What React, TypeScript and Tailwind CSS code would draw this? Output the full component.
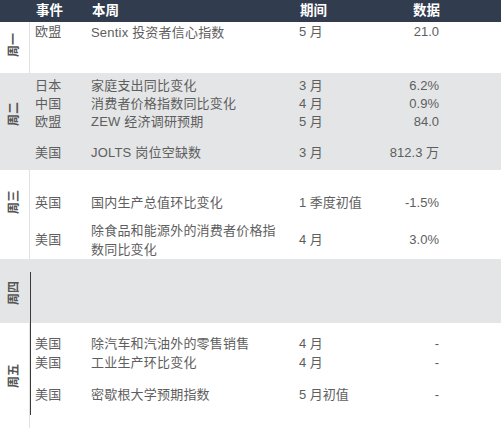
import React from "react";

type Row = { c: string; t: React.ReactNode; p: string; d: string; h: string };

const font = { fontFamily: '"Liberation Sans", "Noto Sans CJK SC", sans-serif' };

function DataRow({ r }: { r: Row }) {
  return (
    <div className={`grid grid-cols-[56px_208px_80px_60px] items-center pl-[5px] ${r.h}`}>
      <div className="tracking-[0.3px]">{r.c}</div>
      <div className="leading-[19px] tracking-[0.2px]">{r.t}</div>
      <div>{r.p}</div>
      <div className="text-right">{r.d}</div>
    </div>
  );
}

function Label({ text, cls }: { text: string; cls: string }) {
  return (
    <div className={`w-[30px] shrink-0 border-r border-[#e2e2e2] flex items-center justify-center ${cls}`}>
      <span className="-rotate-90 inline-block whitespace-nowrap text-[12px] font-bold text-[#555] leading-none">
        {text}
      </span>
    </div>
  );
}

export default function App() {
  return (
    <div className="relative w-[501px] h-[428px] bg-white text-[13px] text-[#5e5e5e] overflow-hidden" style={font}>
      {/* header */}
      <div className="flex h-[22px] bg-[#313c4f] text-white font-bold text-[13.5px]">
        <div className="w-[31px] shrink-0" />
        <div className="grid grid-cols-[56px_208px_80px_60px] items-center pl-[5px]">
          <div>事件</div>
          <div>本周</div>
          <div>期间</div>
          <div className="text-right">数据</div>
        </div>
      </div>

      {/* Monday */}
      <div className="flex h-[51px] bg-white">
        <Label text="周一" cls="pb-[5px]" />
        <div className="flex flex-col">
          <DataRow r={{ c: "欧盟", t: "Sentix 投资者信心指数", p: "5 月", d: "21.0", h: "h-[20px]" }} />
        </div>
      </div>

      {/* Tuesday */}
      <div className="flex h-[97px] bg-[#e4e5e6]">
        <Label text="周二" cls="pb-[15px] border-[#e4e5e6]" />
        <div className="flex flex-col pt-[3px]">
          <DataRow r={{ c: "日本", t: "家庭支出同比变化", p: "3 月", d: "6.2%", h: "h-[18px]" }} />
          <DataRow r={{ c: "中国", t: "消费者价格指数同比变化", p: "4 月", d: "0.9%", h: "h-[18px]" }} />
          <DataRow r={{ c: "欧盟", t: "ZEW 经济调研预期", p: "5 月", d: "84.0", h: "h-[18px]" }} />
          <div className="h-[13px]" />
          <DataRow r={{ c: "美国", t: "JOLTS 岗位空缺数", p: "3 月", d: "812.3 万", h: "h-[18px]" }} />
        </div>
      </div>

      {/* Wednesday */}
      <div className="flex h-[89px] bg-white">
        <Label text="周三" cls="pb-[25px]" />
        <div className="flex flex-col pt-[23px]">
          <DataRow r={{ c: "英国", t: "国内生产总值环比变化", p: "1 季度初值", d: "-1.5%", h: "h-[18px]" }} />
          <div className="h-[10px]" />
          <DataRow
            r={{
              c: "美国",
              t: (
                <>
                  除食品和能源外的消费者价格指
                  <br />
                  数同比变化
                </>
              ),
              p: "4 月",
              d: "3.0%",
              h: "h-[38px]",
            }}
          />
        </div>
      </div>

      {/* Thursday */}
      <div className="flex h-[64px] bg-[#e4e5e6]">
        <Label text="周四" cls="pt-[4px] border-[#e4e5e6]" />
        <div className="flex-1" />
      </div>

      {/* Friday */}
      <div className="flex h-[105px] bg-white">
        <Label text="周五" cls="" />
        <div className="flex flex-col pt-[11px]">
          <DataRow r={{ c: "美国", t: "除汽车和汽油外的零售销售", p: "4 月", d: "-", h: "h-[19px]" }} />
          <DataRow r={{ c: "美国", t: "工业生产环比变化", p: "4 月", d: "-", h: "h-[19px]" }} />
          <div className="h-[13px]" />
          <DataRow r={{ c: "美国", t: "密歇根大学预期指数", p: "5 月初值", d: "-", h: "h-[19px]" }} />
        </div>
      </div>

      {/* dark vertical rule overlay */}
      <div className="absolute left-[30px] top-[272px] h-[143px] w-px bg-[#3a3a3a]" />
    </div>
  );
}
